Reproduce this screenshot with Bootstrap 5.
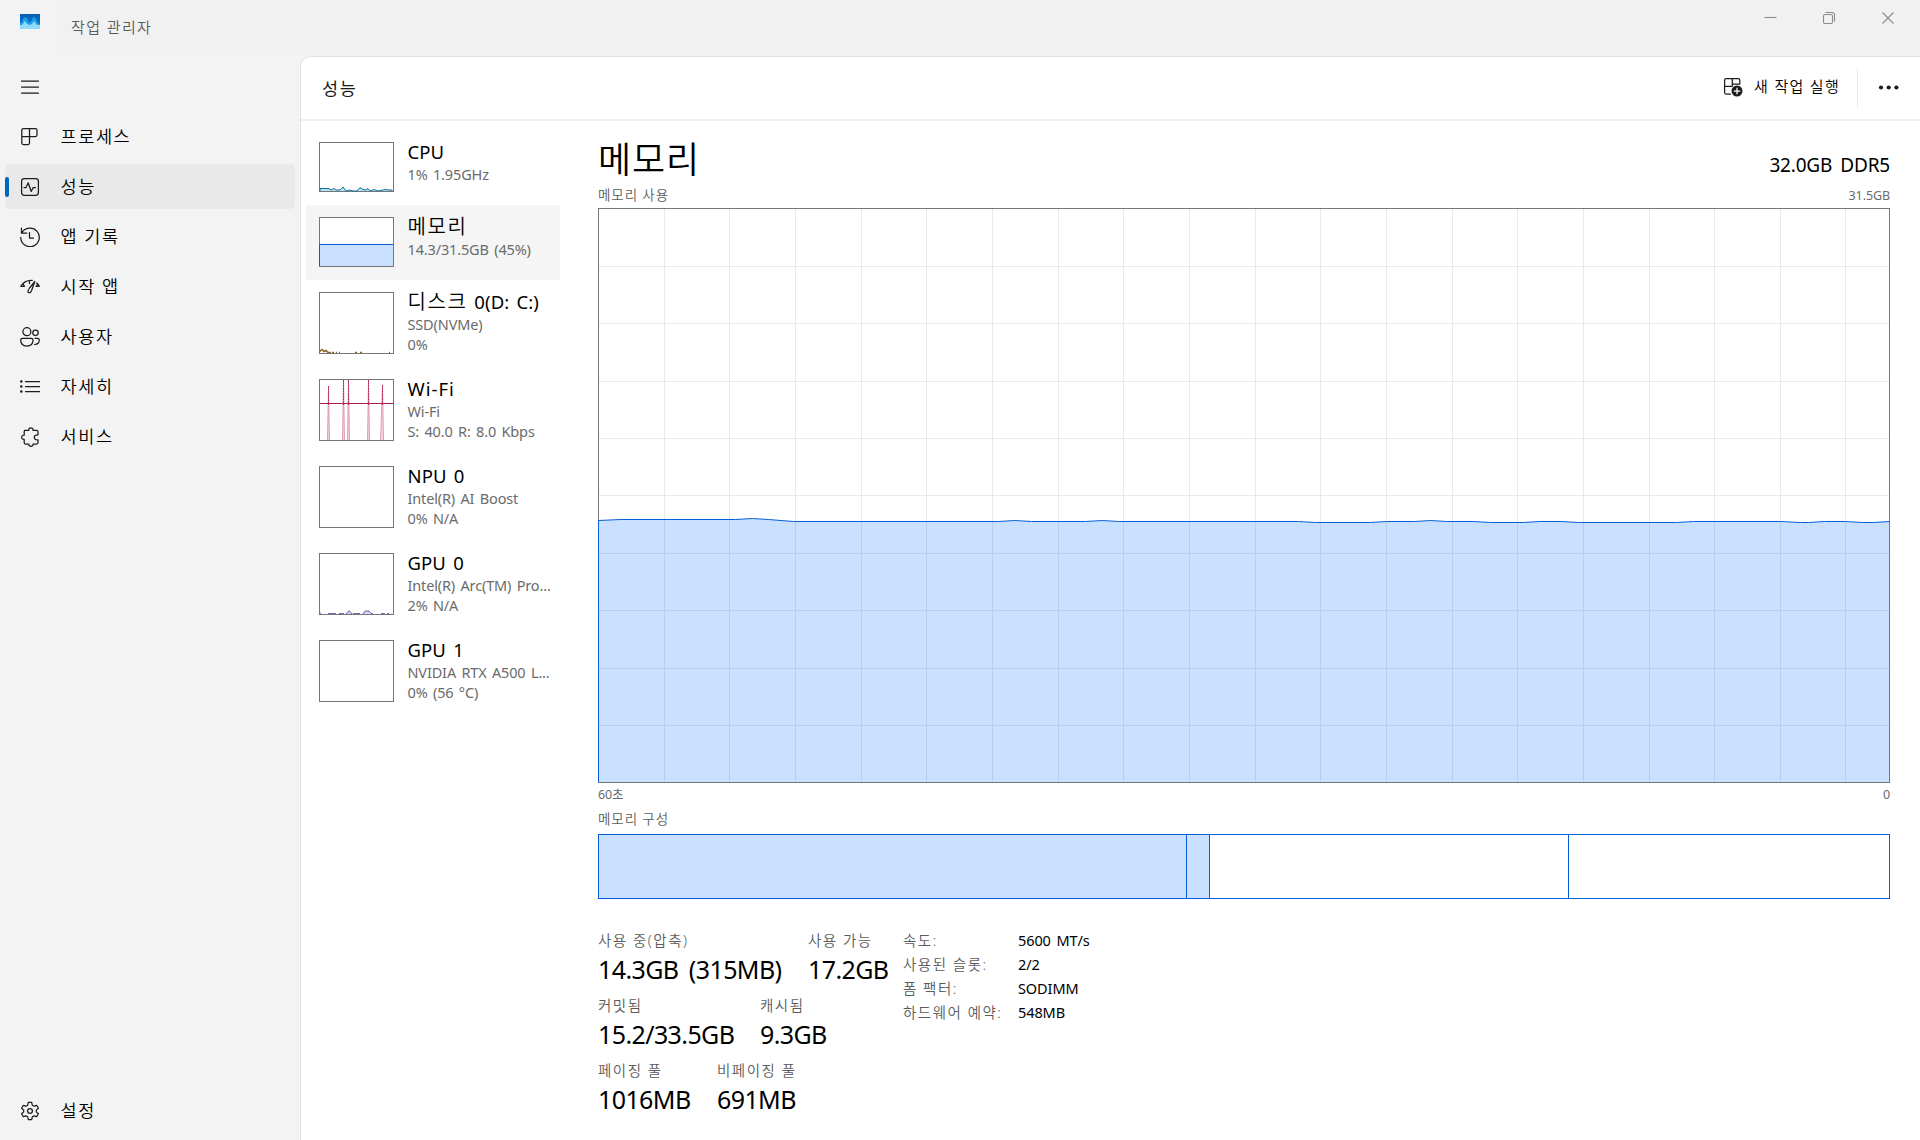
<!DOCTYPE html>
<html lang="ko">
<head>
<meta charset="utf-8">
<title>작업 관리자</title>
<link href="https://cdn.jsdelivr.net/npm/bootstrap@5.3.0/dist/css/bootstrap.min.css" rel="stylesheet">
<style>
body{height:1140px;width:1920px;overflow:hidden;background:#f3f3f3;color:#1a1a1a;font-family:"Noto Sans","Noto Sans CJK KR",sans-serif;font-size:17px;font-weight:350}
svg{display:block;flex:none}
.ic{fill:none;stroke:#1c1c1c;stroke-width:1.25;stroke-linecap:round;stroke-linejoin:round}
.titlebar{height:56px;background:linear-gradient(90deg,#f3f3f3 56px,#f1f1f1 56px)}
.app-icon{margin:14px 0 0 20px}
.app-title{margin:17px 0 0 31px;font-size:15px;line-height:20px;color:#5c5c5c;letter-spacing:1.4px}
.win-btns{padding:11px 25px 0 0;gap:45px}
.win-btns svg{stroke:#8c8c8c;fill:none;stroke-width:1.1}
.side{width:300px;padding:8px 5px 7px}
.side-item{height:45px;margin-bottom:5px;padding-left:15px;gap:20.5px;border-radius:5px;font-size:17.5px;line-height:24px;letter-spacing:1.6px;position:relative;color:#000}
.side-item span{margin-bottom:2px}
.side-item:last-child{margin-bottom:0}
.side-item.current{background:#e9e9e9}
.side-item.current::before{content:"";position:absolute;left:0;top:13px;width:4px;height:20px;border-radius:2px;background:#0067c0}
.panel{background:#fff;border-left:1px solid #e2e2e2;border-top:1px solid #e2e2e2;border-top-left-radius:10px}
.panel-head{height:64px;border-bottom:2px solid #f0f0f0;padding-left:21px}
.panel-name{font-size:17.5px;font-weight:400;letter-spacing:1.6px;line-height:24px}
.run-btn{gap:11px;font-size:15px;letter-spacing:1.3px;margin-right:17px;padding-bottom:2px;color:#000}
.run-btn span{margin-top:-1px}
.sep{width:1px;height:39px;background:#e8e8e8;margin-right:20px}
.dots{margin-right:16px}
.perf{width:260px;padding:9px 0 0 5px}
.perf-item{width:254px;padding:12px 0 13px 13px;gap:13.5px}
.perf-item.current{background:#f5f5f5}
.perf-text{margin:-2px 0 -3px;min-width:0;color:#6b6b6b;font-weight:400;font-size:14.5px;line-height:20px;white-space:nowrap;letter-spacing:-.15px;word-spacing:1.8px}
.perf-name{color:#000;font-size:18.5px;line-height:24px;letter-spacing:.1px;word-spacing:2.3px}
.perf-name.ko{font-size:20px;letter-spacing:1.6px;word-spacing:0;font-weight:350}
.perf-name .lat{font-size:18.5px;letter-spacing:.1px;word-spacing:2.3px;font-weight:400}
.perf-name.wide{letter-spacing:1px}
.detail{padding:16px 30px 0 37px}
.d-title{height:47px}
.big{font-size:36px;line-height:44px;letter-spacing:.9px;color:#000;padding-top:1px}
.spec{font-size:19px;font-weight:400;line-height:26px;letter-spacing:-.2px;word-spacing:3.5px;color:#000;padding-top:15px}
.cap{font-size:12.5px;color:#6b6b6b;font-weight:400;letter-spacing:-.1px}
.cap-ko{font-size:13.5px;letter-spacing:.9px;font-weight:350;color:#5c5c5c}
.cap-top{line-height:24px;margin-top:-1px;height:25px}
.cap-top span:last-child{padding-top:1px}
.cap-axis{line-height:23px}
.cap-comp{line-height:26px;height:28px}
.comp{height:65px;border:1px solid #065fd8}
.comp div{border-right:1px solid #065fd8}
.comp div:last-child{border:0}
.used{background:#cae0ff}
.stats{margin-top:29px}
.stat-row{height:65px}
.lbl{font-size:14.5px;line-height:24px;color:#5c5c5c;letter-spacing:1.5px;white-space:nowrap}
.val{font-size:25px;font-weight:400;line-height:36px;margin-top:-1px;color:#000;letter-spacing:-.6px;word-spacing:4.5px;white-space:nowrap}
.facts{padding-left:10px}
.facts .lbl{width:115px}
.facts .fv{font-size:14.5px;font-weight:400;line-height:24px;color:#000;letter-spacing:-.1px;word-spacing:2px}
</style>
<script src="https://cdn.jsdelivr.net/npm/bootstrap@5.3.0/dist/js/bootstrap.bundle.min.js"></script>
</head>
<body class="d-flex flex-column">
<header class="titlebar d-flex align-items-start">
  <svg class="app-icon" width="20" height="15"><defs><linearGradient id="g" x1="0" y1="0" x2="0" y2="1"><stop offset="0" stop-color="#0a5cb0"/><stop offset="1" stop-color="#0b7fd6"/></linearGradient></defs><rect width="20" height="15" fill="url(#g)"/><path d="M0 10L2 8 3 4.500 5 3 7.500 4.500 9 9 11.500 7 12.500 4 14.500 3 16.500 6 17.500 9 20 10V15H0Z" fill="#1f9fe8"/><path d="M0 11L2 11 5 7 7 10 10 11 12 10 14 7 17 11H20V15H0Z" fill="#8fd9fb"/></svg>
  <div class="app-title">작업 관리자</div>
  <div class="win-btns d-flex ms-auto">
    <svg width="14" height="14"><path d="M1.500 6.500H13.500"/></svg>
    <svg width="14" height="14"><rect x="1.5" y="3.5" width="9" height="9" rx="1.5"/><path d="M3.5 1.5H10Q12.500 1.500 12.500 4V10.500"/></svg>
    <svg width="14" height="14"><path d="M1.500 1.500L12.500 12.500M12.500 1.500L1.500 12.500"/></svg>
  </div>
</header>
<div class="d-flex flex-grow-1">
  <nav class="side d-flex flex-column flex-shrink-0">
    <div class="side-item d-flex align-items-center"><svg class="ic" width="20" height="20"><path d="M1.500 4H18.500M1.500 10H18.500M1.500 16H18.500"/></svg></div>
    <div class="side-item d-flex align-items-center"><svg class="ic" width="20" height="20"><path d="M3.500 1.500H15.500Q17 1.500 17 3V8Q17 9.500 15.500 9.500H1.800V3Q1.800 1.500 3.500 1.500ZM9.500 1.500V16Q9.500 17.500 8 17.500H3.500Q1.800 17.500 1.800 16V9.500"/></svg><span>프로세스</span></div>
    <div class="side-item current d-flex align-items-center"><svg class="ic" width="20" height="20"><rect x="1.600" y="1.600" width="16.800" height="16.800" rx="2.800"/><path d="M4 10.500H6L8.200 5.800 11.200 14.500 13.200 10.500H15.500"/></svg><span>성능</span></div>
    <div class="side-item d-flex align-items-center"><svg class="ic" width="20" height="20"><path d="M1.500 1V6.200H6.800M1.900 5.800A9.300 9.300 0 1 1 .7 10.500M9.500 5.500V11H13.500"/></svg><span>앱 기록</span></div>
    <div class="side-item d-flex align-items-center"><svg class="ic" width="20" height="20"><path d="M.8 9.300Q4.500 2.800 12.300 3.300M.8 9.300L4.500 9.300M2.800 6.700L4.500 9.300M9.500 3.500V6.500M14.800 4.500L9.600 11Q7 14.500 8.500 15.500Q10.800 16.300 11.800 13ZM16.500 6Q18.500 7.300 19.300 9.300M19.300 9.300H16M17.500 7.300L16 9.300"/></svg><span>시작 앱</span></div>
    <div class="side-item d-flex align-items-center"><svg class="ic" width="20" height="20"><circle cx="6.900" cy="4.700" r="4"/><circle cx="15.500" cy="5.800" r="2.700"/><path d="M2.500 11.300H11.300Q13 11.300 13 13C13 17 10.500 19 6.900 19S.7 17 .7 13Q.7 11.300 2.500 11.300ZM15 11.300H17.500Q19.300 11.300 19.300 13Q19.300 17.300 14.500 17.500"/></svg><span>사용자</span></div>
    <div class="side-item d-flex align-items-center"><svg class="ic" width="20" height="20"><path d="M5.500 4.500H19.500M5.500 9.500H19.500M5.500 14.500H19.500"/><g fill="#1c1c1c" stroke="none"><circle cx="1.300" cy="4.500" r="1.300"/><circle cx="1.300" cy="9.500" r="1.300"/><circle cx="1.300" cy="14.500" r="1.300"/></g></svg><span>자세히</span></div>
    <div class="side-item d-flex align-items-center"><svg class="ic" width="20" height="20"><path d="M4.500 3.300H8.800C8.200 .2 13.600 .2 13 3.300H16.500Q18 3.300 18 4.800V7.800C13 7.300 13 13.500 18 12.900V15.500Q18 17 16.500 17H13C13.600 20 8.200 20 8.800 17H5.500Q4.200 17 4.200 15.500V12.400C.8 13 .8 7.500 4.200 8.200V4.800Q4.200 3.300 5.500 3.300"/></svg><span>서비스</span></div>
    <div class="side-item d-flex align-items-center mt-auto"><svg class="ic" width="20" height="20"><path d="M8.300 1.400H11.700L12.300 4.200 14 5.200 16.700 4.300 18.400 7.200 16.300 9.100V10.900L18.400 12.800 16.700 15.700 14 14.800 12.300 15.800 11.700 18.600H8.300L7.700 15.800 6 14.800 3.300 15.700 1.600 12.800 3.700 10.900V9.100L1.600 7.200 3.300 4.300 6 5.200 7.700 4.200Z"/><circle cx="10" cy="10" r="2.400"/></svg><span>설정</span></div>
  </nav>
  <main class="panel flex-grow-1 d-flex flex-column">
    <div class="panel-head d-flex align-items-center">
      <div class="panel-name">성능</div>
      <div class="run-btn d-flex align-items-center ms-auto"><svg class="ic" width="20" height="20"><path d="M16.800 7V3.200Q16.800 1.500 15.200 1.500H3.200Q1.600 1.500 1.600 3.200V15.500Q1.600 17 3.200 17H7.500M9.300 1.500V9.300M1.600 9.300H9.300M9.300 7H16.800"/><circle cx="14" cy="14" r="5.500" fill="#1c1c1c" stroke="none"/><path d="M14 11.200V16.800M11.200 14H16.800" stroke="#fff"/></svg><span>새 작업 실행</span></div>
      <div class="sep"></div>
      <svg class="dots" width="26" height="6"><g fill="#1c1c1c"><circle cx="3" cy="2.500" r="2.100"/><circle cx="10.700" cy="2.500" r="2.100"/><circle cx="18.400" cy="2.500" r="2.100"/></g></svg>
    </div>
    <div class="d-flex flex-grow-1">
      <div class="perf flex-shrink-0">
        <div class="perf-item d-flex"><svg width="75" height="50"><rect x=".5" y=".5" width="74" height="49" fill="#fff" stroke="#767676"/><path d="M1 49V46.500H10L12 48 15 46.500 17 48 21 48 24 45 27 49 31 48 34 49H38L41 45.500 44 47.500 47 48 49 46.500 51 49 55 47.500 59 49 64 48 66 47.500 70 48H73V49" fill="#b8e3f0" stroke="#11719f"/></svg><div class="perf-text"><div class="perf-name">CPU</div>1% 1.95GHz</div></div>
        <div class="perf-item current d-flex"><svg width="75" height="50"><rect x=".5" y=".5" width="74" height="49" fill="#fff" stroke="#767676"/><path d="M1 49V27.500H74V49Z" fill="#cae0ff"/><path d="M.5 49V27.500H74" fill="none" stroke="#065fd8"/><path d="M0 49.500H74.500V27" fill="none" stroke="#767676"/></svg><div class="perf-text"><div class="perf-name ko">메모리</div>14.3/31.5GB (45%)</div></div>
        <div class="perf-item d-flex"><svg width="75" height="62"><path d="M1 60V59L3 57.500 5 59.500 7 58.500 9 60.500H12M13 60.500H15M17 60.500H18M20 60.500H21M36 60.500H38M41 60.500H43M70 60.500H71" fill="none" stroke="#8a6127" stroke-width="1.500"/><rect x=".5" y=".5" width="74" height="61" fill="none" stroke="#767676"/></svg><div class="perf-text"><div class="perf-name ko">디스크 <span class="lat">0(D: C:)</span></div>SSD(NVMe)<br>0%</div></div>
        <div class="perf-item d-flex"><svg width="75" height="62"><g fill="#f5d5df" stroke="#d98aa4" stroke-width=".8"><path d="M8.500 61L9.500 7 10.500 61M23.500 61L24.500 1 25.500 61M28.500 61L29.500 1 30.500 61M48.500 61L49.500 1 50.500 61M61.500 61L63.500 6 64.500 61"/></g><g stroke="#b32a5b" stroke-dasharray="2 .6"><path d="M9.500 7V26M24.500 1V26M29.500 1V26M49.500 1V26M63.500 6V26"/></g><path d="M1 24.500H74" stroke="#a51d50"/><rect x=".5" y=".5" width="74" height="61" fill="none" stroke="#767676"/></svg><div class="perf-text"><div class="perf-name wide">Wi-Fi</div>Wi-Fi<br>S: 40.0 R: 8.0 Kbps</div></div>
        <div class="perf-item d-flex"><svg width="75" height="62"><rect x=".5" y=".5" width="74" height="61" fill="none" stroke="#767676"/></svg><div class="perf-text"><div class="perf-name">NPU 0</div>Intel(R) AI Boost<br>0% N/A</div></div>
        <div class="perf-item d-flex"><svg width="75" height="62"><path d="M1 59.500L2 61M9 60.500H17M20 60.500H25M27 61L30 57.500 33 61M34 60.500H41M44 61L46 58H50L52 60.500H54M62 60.500H66M68 60.500H70" fill="#d9cdf0" stroke="#7a66b8"/><rect x=".5" y=".5" width="74" height="61" fill="none" stroke="#767676"/></svg><div class="perf-text"><div class="perf-name">GPU 0</div>Intel(R) Arc(TM) Pro...<br>2% N/A</div></div>
        <div class="perf-item d-flex"><svg width="75" height="62"><rect x=".5" y=".5" width="74" height="61" fill="none" stroke="#767676"/></svg><div class="perf-text"><div class="perf-name">GPU 1</div>NVIDIA RTX A500 L...<br>0% (56 °C)</div></div>
      </div>
      <section class="detail flex-grow-1">
        <div class="d-title d-flex justify-content-between"><div class="big">메모리</div><div class="spec">32.0GB DDR5</div></div>
        <div class="d-flex justify-content-between cap cap-top"><span class="cap-ko">메모리 사용</span><span>31.5GB</span></div>
        <svg id="chart" width="1292" height="575" shape-rendering="crispEdges"></svg>
        <div class="d-flex justify-content-between cap cap-axis"><span>60초</span><span>0</span></div>
        <div class="cap cap-ko cap-comp">메모리 구성</div>
        <div class="comp d-flex"><div class="used" style="width:588px"></div><div class="used" style="width:23px"></div><div style="width:359px"></div><div class="flex-grow-1"></div></div>
        <div class="stats d-flex">
          <div style="width:295px">
            <div class="stat-row d-flex"><div style="width:210px"><div class="lbl">사용 중(압축)</div><div class="val">14.3GB (315MB)</div></div><div><div class="lbl">사용 가능</div><div class="val">17.2GB</div></div></div>
            <div class="stat-row d-flex"><div style="width:162px"><div class="lbl">커밋됨</div><div class="val">15.2/33.5GB</div></div><div><div class="lbl">캐시됨</div><div class="val">9.3GB</div></div></div>
            <div class="stat-row d-flex"><div style="width:119px"><div class="lbl">페이징 풀</div><div class="val">1016MB</div></div><div><div class="lbl">비페이징 풀</div><div class="val">691MB</div></div></div>
          </div>
          <div class="facts">
            <div class="d-flex"><div class="lbl">속도:</div><div class="fv">5600 MT/s</div></div>
            <div class="d-flex"><div class="lbl">사용된 슬롯:</div><div class="fv">2/2</div></div>
            <div class="d-flex"><div class="lbl">폼 팩터:</div><div class="fv">SODIMM</div></div>
            <div class="d-flex"><div class="lbl">하드웨어 예약:</div><div class="fv">548MB</div></div>
          </div>
        </div>
      </section>
    </div>
  </main>
</div>
<script>
// Memory history: [x, y] knots inside the 1292 x 575 chart
const pts=[[0,312],[22,311],[137,311],[154,310],[170,311],[195,313],[400,313],[416,312],[433,313],[487,313],[504,312],[520,313],[700,313],[717,314],[772,314],[788,313],[816,313],[832,312],[848,313],[875,313],[892,314],[925,314],[941,313],[963,313],[980,314],[1078,314],[1095,313],[1182,313],[1202,314],[1210,314],[1226,313],[1247,313],[1264,314],[1275,314],[1291,313]];
const line=pts.map(p=>(p[0]+.5)+' '+(p[1]+.5)).join('L');
let s='<rect width="1292" height="575" fill="#fff"/><g fill="#e9e9e9">';
for(let i=1;i<20;i++)s+='<rect x="'+Math.round(.1+i*65.65)+'" y="1" width="1" height="573"/>';
for(let i=1;i<10;i++)s+='<rect x="1" y="'+Math.round(.4+i*57.4)+'" width="1290" height="1"/>';
s+='</g><path d="M'+line+'V575H0Z" fill="rgb(0,105,255)" fill-opacity=".207"/><rect x=".5" y=".5" width="1291" height="574" fill="none" stroke="#767676"/><path d="M.5 574V312.500" stroke="#065fd8"/><path d="M'+line+'" fill="none" stroke="#065fd8" shape-rendering="auto"/>';
document.getElementById('chart').innerHTML=s;
</script>
</body>
</html>
